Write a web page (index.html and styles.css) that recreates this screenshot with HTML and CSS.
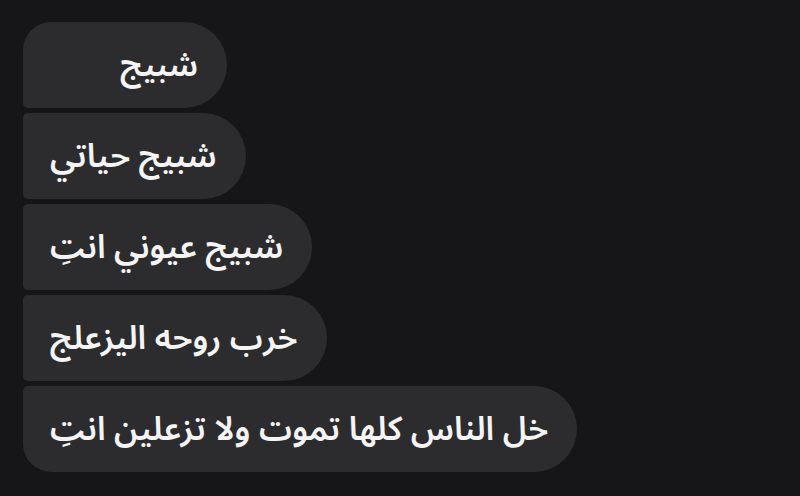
FILE: index.html
```html
<!DOCTYPE html>
<html lang="ar">
<head>
<meta charset="utf-8">
<link rel="stylesheet" href="styles.css">
</head>
<body>
<div class="chat">
  <div class="bubble first wide"><span class="text">شبيج</span></div>
  <div class="bubble"><span class="text">شبيج حياتي</span></div>
  <div class="bubble"><span class="text">شبيج عيوني انتِ</span></div>
  <div class="bubble"><span class="text">خرب روحه اليزعلج</span></div>
  <div class="bubble last"><span class="text">خل الناس كلها تموت ولا تزعلين انتِ</span></div>
</div>
</body>
</html>
```
FILE: styles.css
```css
html, body {
  margin: 0;
  padding: 0;
  background: #161618;
  width: 800px;
  height: 496px;
  overflow: hidden;
}
.chat {
  display: flex;
  flex-direction: column;
  align-items: flex-start;
  gap: 5px;
  padding: 22px 0 0 23px;
}
.bubble {
  direction: rtl;
  display: flex;
  align-items: center;
  box-sizing: border-box;
  height: 86px;
  padding: 0 29px 0 27px;
  background: #2c2c2e;
  border-radius: 5px 43px 43px 5px;
  color: #f4f4f4;
  font-family: "Noto Sans Arabic", "DejaVu Sans", sans-serif;
  font-size: 33px;
  font-weight: 600;
}
.bubble.wide {
  min-width: 204px;
}
.bubble.first {
  border-top-left-radius: 28px;
}
.bubble.last {
  border-bottom-left-radius: 28px;
}
.text {
  white-space: nowrap;
}
```
